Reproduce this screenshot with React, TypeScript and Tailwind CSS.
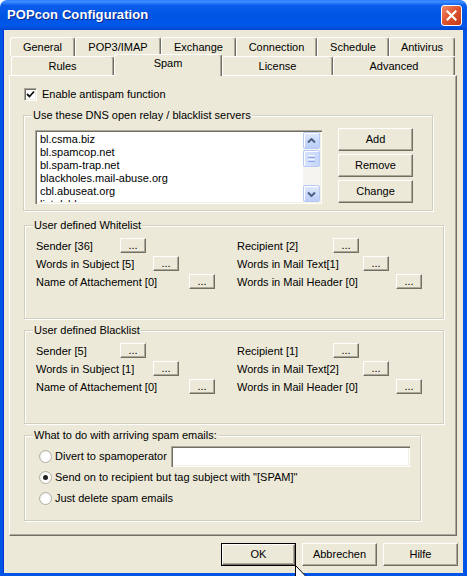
import type { ReactNode } from 'react';

const bevel =
  'border border-t-white border-l-white border-r-[#716F64] border-b-[#716F64] shadow-[inset_-1px_-1px_0_#ACA899] bg-[#ECE9D8]';

function Button({ label, className = '', isDefault = false }: { label: string; className?: string; isDefault?: boolean }) {
  if (isDefault) {
    return (
      <div className={`border border-black ${className}`}>
        <div className={`${bevel} w-full h-full flex items-center justify-center`}>{label}</div>
      </div>
    );
  }
  return <div className={`${bevel} flex items-center justify-center ${className}`}>{label}</div>;
}

function DotsButton() {
  return (
    <div className={`${bevel} w-[26px] h-[15px] flex items-end justify-center leading-[12px] pb-[1px]`}>...</div>
  );
}

function Tab({ label, className = '' }: { label: string; className?: string }) {
  return (
    <div
      className={`flex items-center justify-center border-t border-l border-r border-t-white border-l-white border-r-[#716F64] rounded-t-[3px] shadow-[inset_-1px_0_0_#ACA899] bg-[#ECE9D8] ${className}`}
    >
      {label}
    </div>
  );
}

function GroupBox({ title, className = '', children }: { title: string; className?: string; children?: ReactNode }) {
  return (
    <div className={`relative border border-[#D0D0BF] shadow-[inset_1px_1px_0_#fff,1px_1px_0_#fff] ${className}`}>
      <span className="absolute left-[8px] -top-[7px] bg-[#ECE9D8] px-[1px] leading-[13px]">{title}</span>
      {children}
    </div>
  );
}

function Radio({ checked = false }: { checked?: boolean }) {
  return (
    <div className="w-[13px] h-[13px] rounded-full border border-[#B2B0A4] bg-[radial-gradient(circle_at_60%_60%,#ffffff_0%,#ffffff_45%,#E2E0D6_100%)] flex items-center justify-center shrink-0">
      {checked && <div className="w-[5px] h-[5px] rounded-full bg-[#222]" />}
    </div>
  );
}

function ScrollArrow({ down = false }: { down?: boolean }) {
  return (
    <div className="w-[17px] h-[17px] rounded-[2px] border border-[#B7CAF5] bg-[linear-gradient(180deg,#E1EAFE_0%,#C8D8FB_60%,#B9CDF8_100%)] shadow-[inset_1px_1px_0_#fff] flex items-center justify-center">
      <svg width="9" height="6" viewBox="0 0 9 6">
        <path
          d={down ? 'M1 1.5 L4.5 5 L8 1.5' : 'M1 4.5 L4.5 1 L8 4.5'}
          fill="none"
          stroke="#4D6185"
          strokeWidth="2"
        />
      </svg>
    </div>
  );
}

const servers = [
  'bl.csma.biz',
  'bl.spamcop.net',
  'bl.spam-trap.net',
  'blackholes.mail-abuse.org',
  'cbl.abuseat.org',
  'list.dsbl.org',
];

type Cell = { label: string; labelW: string };

function ListRows({ rows }: { rows: [Cell, Cell][] }) {
  return (
    <div className="flex flex-col gap-[3px] pt-[12px] pl-[11px]">
      {rows.map(([l, r], i) => (
        <div key={i} className="flex h-[15px] items-center">
          <div className="w-[201px] flex items-center">
            <span className={`${l.labelW} leading-[13px] pt-[2px]`}>{l.label}</span>
            <DotsButton />
          </div>
          <div className="flex items-center">
            <span className={`${r.labelW} leading-[13px] pt-[2px]`}>{r.label}</span>
            <DotsButton />
          </div>
        </div>
      ))}
    </div>
  );
}

export default function App() {
  return (
    <div className="relative w-[467px] h-[576px] bg-white overflow-hidden font-['Liberation_Sans',Arial,sans-serif] text-[11px] text-black">
      <div className="w-full h-full flex flex-col rounded-t-[7px] overflow-hidden">
        {/* title bar */}
        <div className="h-[30px] shrink-0 flex items-center justify-between pl-[7px] pr-[5px] bg-[linear-gradient(180deg,#2F7BFF_0%,#3D8EFF_6%,#0A5CEC_18%,#0054E3_55%,#0058EB_85%,#0046CF_100%)]">
          <span className="text-white font-bold text-[13px] [text-shadow:1px_1px_0_#0A2A8A] tracking-[0.1px]">
            POPcon Configuration
          </span>
          <div className="w-[21px] h-[21px] rounded-[3px] border border-white bg-[linear-gradient(135deg,#F08A6C_0%,#E1552F_45%,#C23A18_100%)] flex items-center justify-center">
            <svg width="11" height="11" viewBox="0 0 11 11">
              <path d="M1.5 1.5 L9.5 9.5 M9.5 1.5 L1.5 9.5" stroke="white" strokeWidth="2.2" strokeLinecap="square" />
            </svg>
          </div>
        </div>

        {/* body */}
        <div className="flex-1 flex flex-col bg-[#ECE9D8] border-l-[3px] border-r-[4px] border-b-[3px] border-[#0055E5] shadow-[inset_1px_0_0_#0831D9]">
          {/* tabs */}
          <div className="mt-[7px] ml-[7px] flex h-[19px]">
            <Tab label="General" className="w-[65px] h-[19px]" />
            <Tab label="POP3/IMAP" className="w-[86px] h-[19px]" />
            <Tab label="Exchange" className="w-[75px] h-[19px]" />
            <Tab label="Connection" className="w-[81px] h-[19px]" />
            <Tab label="Schedule" className="w-[72px] h-[19px]" />
            <Tab label="Antivirus" className="w-[66px] h-[19px]" />
          </div>
          <div className="ml-[8px] flex items-end h-[19px]">
            <Tab label="Rules" className="w-[103px] h-[19px] pt-[1px]" />
            <Tab label="Spam" className="w-[108px] h-[22px] relative top-[1px] z-10 pb-[4px]" />
            <Tab label="License" className="w-[111px] h-[19px] pt-[1px]" />
            <Tab label="Advanced" className="w-[122px] h-[19px] pt-[1px]" />
          </div>

          {/* page */}
          <div className="ml-[6px] w-[448px] h-[461px] shrink-0 border border-t-white border-l-white border-r-[#716F64] border-b-[#716F64] shadow-[inset_-1px_-1px_0_#ACA899] flex flex-col">
            <div className="mt-[12px] ml-[14px] flex items-center gap-[5px] h-[13px]">
              <div className="w-[13px] h-[13px] border border-t-[#ACA899] border-l-[#ACA899] border-b-white border-r-white shadow-[inset_1px_1px_0_#716F64,inset_-1px_-1px_0_#F1EFE2] bg-white flex items-center justify-center">
                <svg width="9" height="9" viewBox="0 0 9 9">
                  <path d="M1 4 L3.5 6.5 L8 1.5" fill="none" stroke="#111" strokeWidth="1.8" />
                </svg>
              </div>
              <span className="leading-[13px]">Enable antispam function</span>
            </div>

            <GroupBox title="Use these DNS open relay / blacklist servers" className="mt-[14px] ml-[13px] w-[410px] h-[96px] shrink-0">
              <div className="flex items-start pt-[12px] pl-[11px]">
                <div className="mt-[2px] w-[287px] h-[74px] bg-white p-[2px] flex shadow-[inset_1px_1px_0_#ACA899,inset_2px_2px_0_#716F64,inset_-1px_-1px_0_#fff,inset_-2px_-2px_0_#F1EFE2]">
                  <div className="flex-1 overflow-hidden pl-[3px] pt-[1px]">
                    {servers.map((s) => (
                      <div key={s} className="h-[13px] leading-[13px] whitespace-nowrap">
                        {s}
                      </div>
                    ))}
                  </div>
                  <div className="w-[17px] flex flex-col bg-[#F5F4EE]">
                    <ScrollArrow />
                    <div className="mt-[1px] w-[17px] h-[17px] rounded-[2px] border border-[#B7CAF5] bg-[linear-gradient(90deg,#D8E4FD_0%,#C6D7FB_100%)] shadow-[inset_1px_1px_0_#fff] flex flex-col items-center justify-center gap-[1px]">
                      <div className="w-[7px] h-[1px] bg-[#EEF3FF]" />
                      <div className="w-[7px] h-[1px] bg-[#8CA7E0]" />
                      <div className="w-[7px] h-[1px] bg-[#EEF3FF]" />
                      <div className="w-[7px] h-[1px] bg-[#8CA7E0]" />
                    </div>
                    <div className="flex-1" />
                    <ScrollArrow down />
                  </div>
                </div>
                <div className="ml-[16px] flex flex-col gap-[3px]">
                  <Button label="Add" className="w-[75px] h-[23px]" />
                  <Button label="Remove" className="w-[75px] h-[23px]" />
                  <Button label="Change" className="w-[75px] h-[23px]" />
                </div>
              </div>
            </GroupBox>

            <GroupBox title="User defined Whitelist" className="mt-[14px] ml-[14px] w-[420px] h-[94px] shrink-0">
              <ListRows
                rows={[
                  [
                    { label: 'Sender [36]', labelW: 'w-[84px]' },
                    { label: 'Recipient [2]', labelW: 'w-[96px]' },
                  ],
                  [
                    { label: 'Words in Subject [5]', labelW: 'w-[117px]' },
                    { label: 'Words in Mail Text[1]', labelW: 'w-[126px]' },
                  ],
                  [
                    { label: 'Name of Attachement [0]', labelW: 'w-[153px]' },
                    { label: 'Words in Mail Header [0]', labelW: 'w-[159px]' },
                  ],
                ]}
              />
            </GroupBox>

            <GroupBox title="User defined Blacklist" className="mt-[11px] ml-[14px] w-[420px] h-[94px] shrink-0">
              <ListRows
                rows={[
                  [
                    { label: 'Sender [5]', labelW: 'w-[84px]' },
                    { label: 'Recipient [1]', labelW: 'w-[96px]' },
                  ],
                  [
                    { label: 'Words in Subject [1]', labelW: 'w-[117px]' },
                    { label: 'Words in Mail Text[2]', labelW: 'w-[126px]' },
                  ],
                  [
                    { label: 'Name of Attachement [0]', labelW: 'w-[153px]' },
                    { label: 'Words in Mail Header [0]', labelW: 'w-[159px]' },
                  ],
                ]}
              />
            </GroupBox>

            <GroupBox title="What to do with arriving spam emails:" className="mt-[11px] ml-[14px] w-[397px] h-[86px] shrink-0">
              <div className="flex flex-col pt-[10px] pl-[14px]">
                <div className="flex items-center h-[21px]">
                  <Radio />
                  <span className="ml-[3px] w-[116px] leading-[13px]">Divert to spamoperator</span>
                  <div className="w-[239px] h-[21px] bg-white shadow-[inset_1px_1px_0_#ACA899,inset_2px_2px_0_#716F64,inset_-1px_-1px_0_#fff,inset_-2px_-2px_0_#F1EFE2]" />
                </div>
                <div className="flex items-center h-[21px]">
                  <Radio checked />
                  <span className="ml-[3px] leading-[13px]">Send on to recipient but tag subject with "[SPAM]"</span>
                </div>
                <div className="flex items-center h-[21px]">
                  <Radio />
                  <span className="ml-[3px] leading-[13px]">Just delete spam emails</span>
                </div>
              </div>
            </GroupBox>
          </div>

          {/* dialog buttons */}
          <div className="mt-[7px] flex justify-end gap-[6px] pr-[5px]">
            <Button label="OK" isDefault className="w-[75px] h-[23px]" />
            <Button label="Abbrechen" className="w-[75px] h-[23px]" />
            <Button label="Hilfe" className="w-[75px] h-[23px]" />
          </div>
        </div>
      </div>

      {/* mouse pointer */}
      <svg className="absolute left-[295px] top-[565px]" width="12" height="19" viewBox="0 0 12 19">
        <path d="M0.5 0.5 L0.5 16 L4 12.5 L6.5 18 L8.5 17 L6 11.5 L11 11.5 Z" fill="white" stroke="black" strokeWidth="1" />
      </svg>
    </div>
  );
}
